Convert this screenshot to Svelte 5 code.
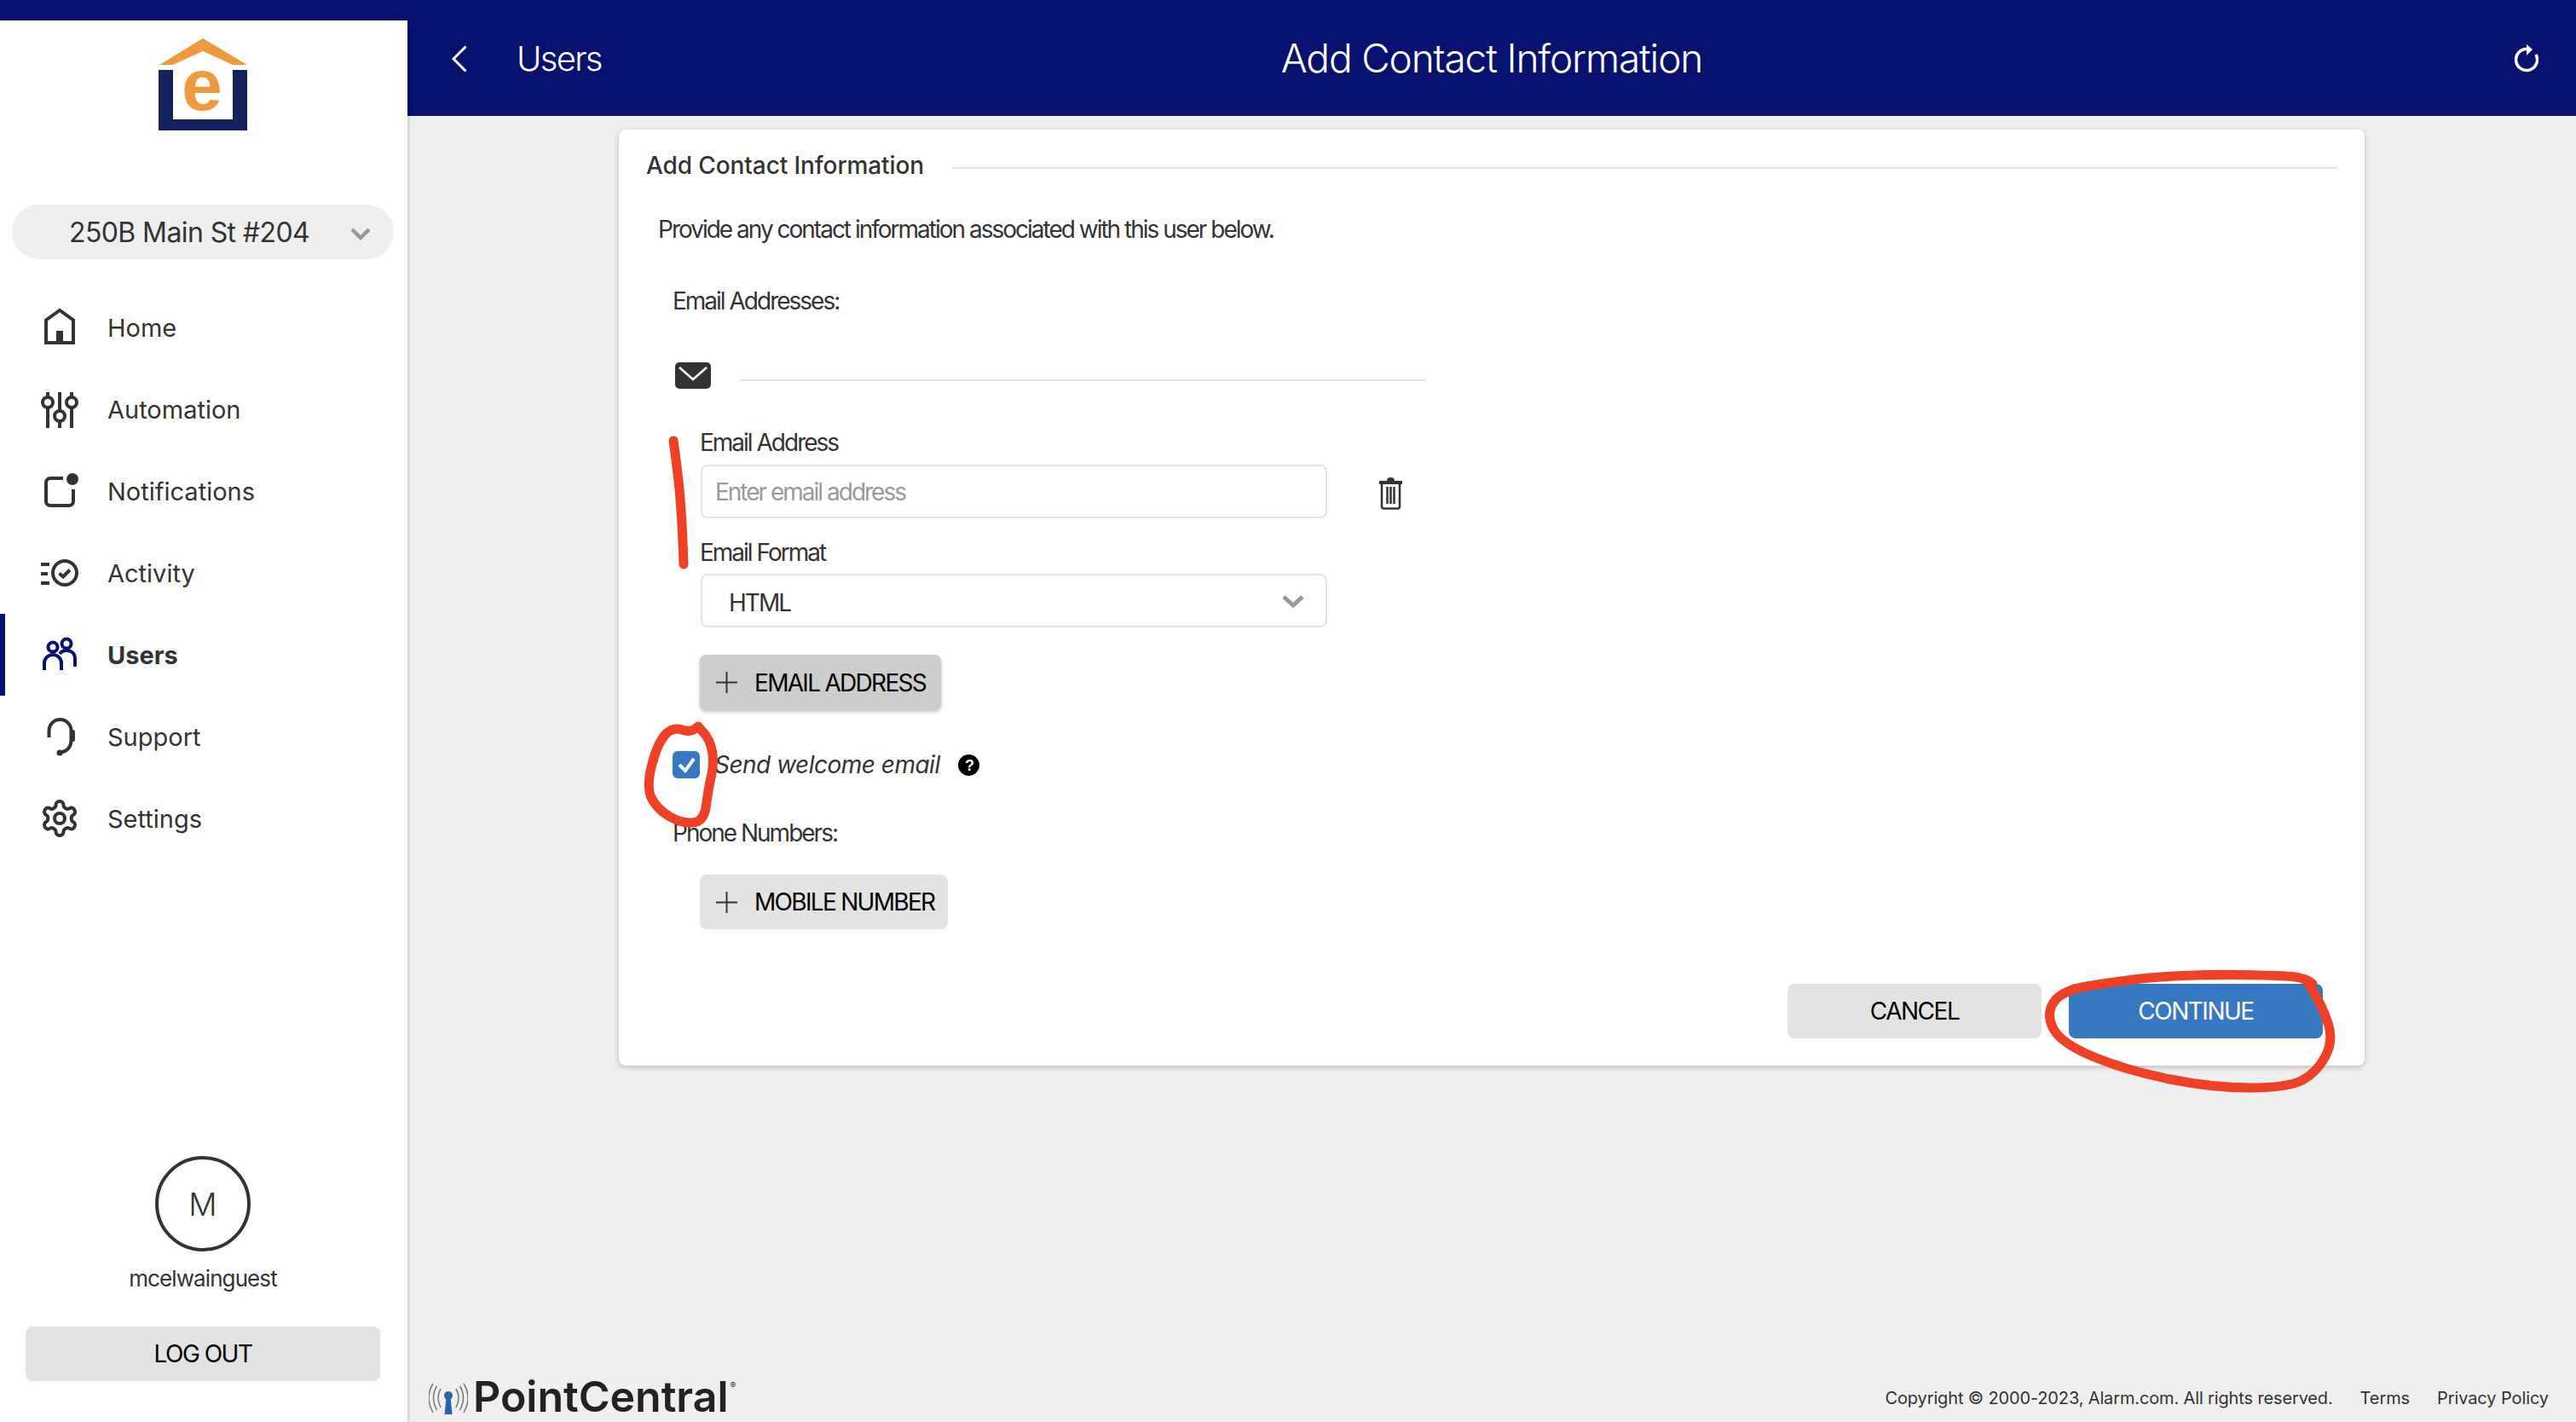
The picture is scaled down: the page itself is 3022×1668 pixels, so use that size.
<script lang="ts">
	const navItems = [
		{ key: 'home', label: 'Home' },
		{ key: 'automation', label: 'Automation' },
		{ key: 'notifications', label: 'Notifications' },
		{ key: 'activity', label: 'Activity' },
		{ key: 'users', label: 'Users', active: true },
		{ key: 'support', label: 'Support' },
		{ key: 'settings', label: 'Settings' }
	];

	// Hand-drawn red marks on top of the screenshot
	const marks = [
		[[790, 517], [796, 560], [800, 610], [802, 662]],
		[[819, 852], [812, 860], [788, 852], [770, 875], [758, 925], [772, 950], [800, 966], [826, 964], [831, 925], [838, 895], [833, 868], [819, 852]],
		[[2713, 1154], [2704, 1146], [2660, 1144], [2595, 1143], [2527, 1146], [2478, 1152], [2418, 1162], [2400, 1190], [2418, 1224], [2496, 1256], [2596, 1276], [2684, 1276], [2718, 1258], [2738, 1220], [2724, 1180], [2708, 1154]]
	];

	function smooth(points: number[][]) {
		let d = `M${points[0][0]} ${points[0][1]}`;
		for (let i = 1; i < points.length - 1; i++) {
			const mx = (points[i][0] + points[i + 1][0]) / 2;
			const my = (points[i][1] + points[i + 1][1]) / 2;
			d += ` Q${points[i][0]} ${points[i][1]} ${mx} ${my}`;
		}
		const last = points[points.length - 1];
		return d + ` L${last[0]} ${last[1]}`;
	}
</script>

{#snippet navIcon(key: string)}
	{#if key === 'home'}
		<svg class="nav-icon" viewBox="0 0 48 48" fill="none" stroke="currentColor" stroke-width="4">
			<path d="M8 42V15.5L24 4l16 11.5V42z" />
			<rect x="20" y="28" width="8" height="14" fill="currentColor" stroke="none" />
		</svg>
	{:else if key === 'automation'}
		<svg class="nav-icon" viewBox="0 0 48 48" fill="none" stroke="currentColor" stroke-width="4">
			<path d="M10 4v5M10 22v24M24 4v22M24 38v8M38 4v5M38 22v24" />
			<circle cx="10" cy="16" r="6" />
			<circle cx="24" cy="32" r="6" />
			<circle cx="38" cy="16" r="6" />
		</svg>
	{:else if key === 'notifications'}
		<svg class="nav-icon" viewBox="0 0 48 48" fill="none" stroke="currentColor" stroke-width="4">
			<path d="M28 9H13a5 5 0 0 0-5 5v22a5 5 0 0 0 5 5h22a5 5 0 0 0 5-5V22" />
			<circle cx="39" cy="10" r="7" fill="currentColor" stroke="none" />
		</svg>
	{:else if key === 'activity'}
		<svg class="nav-icon" viewBox="0 0 48 48" fill="none" stroke="currentColor" stroke-width="4">
			<path d="M2 14h10M2 25h8M2 36h10" />
			<circle cx="30" cy="24" r="14" />
			<path d="M23.5 24.5l4.5 4 8-8" />
		</svg>
	{:else if key === 'users'}
		<svg class="nav-icon" viewBox="0 0 48 48" fill="none" stroke="currentColor" stroke-width="4">
			<circle cx="16" cy="15" r="5.5" />
			<circle cx="32" cy="11" r="5.5" />
			<path d="M6 42v-8a10 10 0 0 1 20 0v8" />
			<path d="M24 23c2-3 5-4 8-4 6 0 10 4 10 10v9" />
		</svg>
	{:else if key === 'support'}
		<svg class="nav-icon" viewBox="0 0 48 48" fill="none" stroke="currentColor" stroke-width="4">
			<path d="M11.5 25v-8a13 13 0 0 1 26 0v11c0 8-4 13-13 15" />
			<rect x="37" y="16" width="5" height="14" rx="2.5" fill="currentColor" stroke="none" />
			<circle cx="24" cy="43" r="3.5" fill="currentColor" stroke="none" />
		</svg>
	{:else}
		<svg class="nav-icon" viewBox="0 0 24 24" fill="none" stroke="currentColor" stroke-width="2">
			<path d="M12.22 2h-.44a2 2 0 0 0-2 2v.18a2 2 0 0 1-1 1.73l-.43.25a2 2 0 0 1-2 0l-.15-.08a2 2 0 0 0-2.73.73l-.22.38a2 2 0 0 0 .73 2.73l.15.1a2 2 0 0 1 1 1.72v.51a2 2 0 0 1-1 1.74l-.15.09a2 2 0 0 0-.73 2.73l.22.38a2 2 0 0 0 2.73.73l.15-.08a2 2 0 0 1 2 0l.43.25a2 2 0 0 1 1 1.73V20a2 2 0 0 0 2 2h.44a2 2 0 0 0 2-2v-.18a2 2 0 0 1 1-1.73l.43-.25a2 2 0 0 1 2 0l.15.08a2 2 0 0 0 2.73-.73l.22-.39a2 2 0 0 0-.73-2.73l-.15-.08a2 2 0 0 1-1-1.74v-.5a2 2 0 0 1 1-1.74l.15-.09a2 2 0 0 0 .73-2.73l-.22-.38a2 2 0 0 0-2.73-.73l-.15.08a2 2 0 0 1-2 0l-.43-.25a2 2 0 0 1-1-1.73V4a2 2 0 0 0-2-2z" />
			<circle cx="12" cy="12" r="3" />
		</svg>
	{/if}
{/snippet}

{#snippet plusIcon()}
	<svg class="plus" viewBox="0 0 26 26" fill="none" stroke="#333" stroke-width="2">
		<path d="M13 0v26M0 13h26" />
	</svg>
{/snippet}

<div class="app">
	<div class="side-col">
		<aside class="sidebar">
			<svg class="logo" viewBox="0 0 106 108">
				<path d="M53 0l52 31H88L53 15 18 31H2z" fill="#f09a3e" />
				<path d="M1 37h17v58h70V37h17v71H1z" fill="#13235b" />
				<text x="52" y="84" text-anchor="middle" font-family="Liberation Sans, sans-serif" font-weight="700" font-size="86" fill="#f09a3e">e</text>
			</svg>

			<div class="property">
				<span>250B Main St #204</span>
				<svg class="property-chevron" viewBox="0 0 24 16" fill="none" stroke="#999" stroke-width="4.5">
					<path d="M2 3l10 10L22 3" />
				</svg>
			</div>

			<nav class="nav">
				{#each navItems as item}
					<div class="nav-item" class:active={item.active}>
						{@render navIcon(item.key)}
						<span>{item.label}</span>
					</div>
				{/each}
			</nav>

			<div class="account">
				<div class="avatar">M</div>
				<div class="username">mcelwainguest</div>
				<button class="logout">LOG OUT</button>
			</div>
		</aside>
	</div>

	<main class="main">
		<header class="topbar">
			<div class="back">
				<svg class="back-icon" viewBox="0 0 18 32" fill="none" stroke="#fff" stroke-width="3">
					<path d="M16.5 1.5L2 16l14.5 14.5" />
				</svg>
				<span>Users</span>
			</div>
			<h1>Add Contact Information</h1>
			<svg class="refresh" viewBox="0 0 28 34" fill="none" stroke="#fff" stroke-width="3.5">
				<path d="M14 6.500A12.500 12.500 0 1 0 25 13" />
				<path d="M14 1l7 6-7 7z" fill="#fff" stroke="none" />
			</svg>
		</header>

		<div class="content">
			<section class="card">
				<div class="card-head">
					<h2>Add Contact Information</h2>
					<div class="rule"></div>
				</div>

				<p class="intro">Provide any contact information associated with this user below.</p>

				<div class="section-label email-label">Email Addresses:</div>

				<div class="email-row">
					<svg class="envelope" viewBox="0 0 42 31">
						<rect width="42" height="31" rx="5" fill="#333" />
						<path d="M5 6l16 14L37 6" fill="none" stroke="#fff" stroke-width="2.500" />
					</svg>
					<div class="email-rule"></div>
				</div>

				<div class="fields">
					<label class="field-label" for="email">Email Address</label>
					<div class="input-row">
						<input id="email" class="text-input" placeholder="Enter email address" />
						<svg class="trash" viewBox="0 0 27 39" fill="none" stroke="#333" stroke-width="2.5">
							<path d="M0 7h27" stroke-width="4" />
							<path d="M9 5q0-4 4.5-4T18 5z" fill="#333" stroke="none" />
							<path d="M3 9v26a2.5 2.5 0 0 0 2.5 2.5h16A2.5 2.5 0 0 0 24 35V9M9.5 12v20M13.5 12v20M17.5 12v20" />
						</svg>
					</div>

					<label class="field-label format-label" for="format">Email Format</label>
					<div class="select-wrap">
						<select id="format" class="select">
							<option>HTML</option>
						</select>
						<svg class="select-chevron" viewBox="0 0 26 16" fill="none" stroke="#999" stroke-width="5">
							<path d="M2 3l11 10L24 3" />
						</svg>
					</div>

					<button class="add-btn pressed">
						{@render plusIcon()}
						EMAIL ADDRESS
					</button>
				</div>

				<div class="welcome">
					<span class="checkbox">
						<svg viewBox="0 0 32 32" fill="none" stroke="#fff" stroke-width="4">
							<path d="M8 16l7 7L25 9" />
						</svg>
					</span>
					<span class="welcome-text">Send welcome email</span>
					<svg class="help" viewBox="0 0 25 25">
						<circle cx="12.5" cy="12.5" r="12.5" fill="#000" />
						<text x="12.5" y="19" text-anchor="middle" font-family="Liberation Sans, sans-serif" font-weight="700" font-size="18" fill="#fff">?</text>
					</svg>
				</div>

				<div class="section-label phone-label">Phone Numbers:</div>

				<div class="fields">
					<button class="add-btn mobile">
						{@render plusIcon()}
						MOBILE NUMBER
					</button>
				</div>

				<div class="actions">
					<button class="action cancel">CANCEL</button>
					<button class="action continue">CONTINUE</button>
				</div>
			</section>
		</div>

		<footer class="footer">
			<div class="brand">
				<svg class="brand-icon" viewBox="0 0 46 40" fill="none" stroke="#777" stroke-width="1.5">
					<path d="M14 8q-6 10 0 22M9.500 5q-8 13 0 28M5 2q-10 16 0 34" />
					<path d="M32 8q6 10 0 22M36.500 5q8 13 0 28M41 2q10 16 0 34" />
					<circle cx="23" cy="16" r="5" fill="#2a62ad" stroke="none" />
					<path d="M20.500 18h5l2 20h-9z" fill="#2a62ad" stroke="none" />
				</svg>
				<span class="brand-name">PointCentral</span>
				<span class="brand-mark">®</span>
			</div>
			<div class="legal">
				<span class="copyright">Copyright © 2000-2023, Alarm.com. All rights reserved.</span>
				<span>Terms</span>
				<span>Privacy Policy</span>
			</div>
		</footer>
	</main>

	<svg class="marks" viewBox="0 0 3022 1668" fill="none" stroke="#ee4126" stroke-width="11" stroke-linecap="round" stroke-linejoin="round">
		{#each marks as mark}
			<path d={smooth(mark)} />
		{/each}
	</svg>
</div>

<style>
	:global(body) {
		margin: 0;
		background: #efefef;
	}

	.app {
		position: relative;
		display: flex;
		width: 3022px;
		height: 1668px;
		overflow: hidden;
		font-family: Inter, 'Liberation Sans', sans-serif;
		color: #333;
		background: #efefef;
	}

	/* Sidebar */
	.side-col {
		flex: none;
		width: 478px;
		background: linear-gradient(#07116f 136px, transparent 136px);
		position: relative;
		z-index: 1;
	}

	.sidebar {
		display: flex;
		flex-direction: column;
		height: 1644px;
		margin-top: 24px;
		background: #fff;
		box-shadow: 2px 0 3px rgba(0, 0, 0, 0.12);
	}

	.logo {
		width: 106px;
		height: 108px;
		margin: 21px 0 0 185px;
	}

	.property {
		position: relative;
		display: flex;
		align-items: center;
		height: 64px;
		margin: 87px 16px 0 14px;
		padding-left: 67px;
		border-radius: 32px;
		background: #efefef;
		font-size: 32px;
		letter-spacing: -0.6px;
	}

	.property-chevron {
		position: absolute;
		right: 27px;
		top: 26px;
		width: 24px;
		height: 16px;
	}

	.nav {
		margin-top: 32px;
	}

	.nav-item {
		display: flex;
		align-items: center;
		gap: 32px;
		height: 96px;
		padding-left: 46px;
		font-size: 29px;
		box-sizing: border-box;
	}

	.nav-item.active {
		font-weight: 700;
		border-left: 6px solid #07116f;
		padding-left: 40px;
	}

	.nav-item.active .nav-icon {
		color: #07116f;
	}

	.nav-icon {
		flex: none;
		width: 48px;
		height: 48px;
	}

	.account {
		display: flex;
		flex-direction: column;
		align-items: center;
		margin-top: auto;
		padding: 0 2px 48px 0;
	}

	.avatar {
		display: flex;
		align-items: center;
		justify-content: center;
		width: 112px;
		height: 112px;
		border: 4px solid #333;
		border-radius: 50%;
		box-sizing: border-box;
		font-size: 37px;
		font-weight: 300;
	}

	.username {
		margin-top: 14px;
		line-height: 36px;
		font-size: 26px;
		letter-spacing: -0.9px;
	}

	.logout {
		width: 416px;
		height: 64px;
		margin-top: 38px;
		border: none;
		border-radius: 8px;
		background: #e3e3e3;
		color: #000;
		font: inherit;
		font-size: 28px;
		letter-spacing: -1.5px;
	}

	/* Main column */
	.main {
		flex: 1;
		display: flex;
		flex-direction: column;
		min-width: 0;
	}

	.topbar {
		position: relative;
		display: flex;
		align-items: center;
		justify-content: center;
		flex: none;
		height: 136px;
		background: #07116f;
		color: #fff;
	}

	.back {
		position: absolute;
		left: 52px;
		top: 0;
		bottom: 0;
		display: flex;
		align-items: center;
		gap: 58px;
		font-size: 40px;
		font-weight: 300;
		letter-spacing: -1.7px;
	}

	.back-icon {
		width: 18px;
		height: 32px;
		margin-top: 2px;
	}

	.topbar h1 {
		margin: 0;
		font-size: 46px;
		font-weight: 300;
		letter-spacing: -1.15px;
	}

	.refresh {
		position: absolute;
		right: 44px;
		top: 51px;
		width: 28px;
		height: 34px;
	}

	.content {
		flex: 1;
		padding-top: 16px;
	}

	.card {
		box-sizing: border-box;
		width: 2048px;
		height: 1098px;
		margin: 0 auto;
		padding: 0 32px;
		border-radius: 8px;
		background: #fff;
		box-shadow: 0 2px 6px rgba(0, 0, 0, 0.22);
		font-size: 28px;
		letter-spacing: -2px;
	}

	.card-head {
		display: flex;
		align-items: center;
		gap: 33px;
		height: 84px;
	}

	.card-head h2 {
		margin: 0;
		font-size: 28px;
		font-weight: 500;
		letter-spacing: -0.1px;
		white-space: nowrap;
	}

	.rule {
		flex: 1;
		height: 2px;
		margin-top: 6px;
		background: #e3e3e3;
	}

	.intro {
		margin: 13px 0 0 14px;
		line-height: 40px;
	}

	.section-label {
		margin-left: 31px;
		line-height: 40px;
	}

	.email-label {
		margin-top: 44px;
	}

	.email-row {
		display: flex;
		gap: 34px;
		height: 32px;
		margin: 52px 0 0 34px;
	}

	.envelope {
		flex: none;
		width: 42px;
		height: 31px;
	}

	.email-rule {
		width: 805px;
		height: 2px;
		margin-top: 20px;
		background: #e3e3e3;
	}

	.fields {
		margin-left: 63px;
	}

	.field-label {
		display: block;
		line-height: 40px;
		margin-top: 42px;
	}

	.format-label {
		margin-top: 20px;
	}

	.input-row {
		display: flex;
		align-items: flex-start;
		gap: 61px;
		margin: 6px 0 0 1px;
	}

	.text-input,
	.select {
		box-sizing: border-box;
		width: 735px;
		height: 63px;
		border: 2px solid #e3e3e3;
		border-radius: 8px;
		background: #fff;
		font: inherit;
		letter-spacing: inherit;
		color: #333;
		outline: none;
	}

	.text-input {
		padding-left: 15px;
	}

	.text-input::placeholder {
		color: #999;
	}

	.trash {
		flex: none;
		width: 27px;
		height: 39px;
		margin-top: 14px;
	}

	.select-wrap {
		position: relative;
		width: 735px;
		margin: 5px 0 0 1px;
	}

	.select {
		display: block;
		appearance: none;
		padding: 4px 0 0 31px;
	}

	.select-chevron {
		position: absolute;
		right: 27px;
		top: 24px;
		width: 26px;
		height: 16px;
	}

	.add-btn {
		display: flex;
		align-items: center;
		gap: 20px;
		box-sizing: border-box;
		height: 64px;
		padding: 0 0 0 19px;
		border: none;
		border-radius: 8px;
		background: #e3e3e3;
		color: #000;
		font: inherit;
		letter-spacing: -1.7px;
		white-space: nowrap;
	}

	.add-btn.pressed {
		width: 283px;
		height: 65px;
		margin-top: 32px;
		background: #cdcdcd;
		box-shadow: 0 2px 4px rgba(0, 0, 0, 0.25);
	}

	.add-btn.mobile {
		width: 291px;
		margin-top: 29px;
	}

	.plus {
		flex: none;
		width: 25px;
		height: 25px;
	}

	.welcome {
		display: flex;
		align-items: center;
		height: 32px;
		margin: 48px 0 0 31px;
	}

	.checkbox {
		flex: none;
		display: block;
		width: 32px;
		height: 32px;
		border-radius: 6px;
		background: #3778c2;
	}

	.checkbox svg {
		display: block;
	}

	.welcome-text {
		margin-left: 17px;
		font-style: italic;
		letter-spacing: -0.5px;
	}

	.help {
		flex: none;
		width: 25px;
		height: 25px;
		margin-left: 21px;
	}

	.phone-label {
		margin-top: 44px;
	}

	.actions {
		display: flex;
		justify-content: flex-end;
		gap: 32px;
		margin: 64px 17px 0 0;
	}

	.action {
		width: 298px;
		height: 64px;
		border: none;
		border-radius: 8px;
		font: inherit;
		letter-spacing: -1.5px;
	}

	.cancel {
		background: #e3e3e3;
		color: #000;
	}

	.continue {
		background: #3778c2;
		color: #fff;
	}

	/* Footer */
	.footer {
		display: flex;
		align-items: flex-end;
		justify-content: space-between;
		height: 52px;
		padding: 0 32px 0 24px;
	}

	.brand {
		display: flex;
		align-items: flex-start;
		height: 52px;
	}

	.brand-icon {
		flex: none;
		width: 46px;
		height: 40px;
		margin: 5px 6px 0 1px;
	}

	.brand-name {
		margin-top: -3px;
		font-size: 50px;
		font-weight: 600;
		line-height: 50px;
		color: #222;
	}

	.brand-mark {
		font-size: 10px;
		line-height: 14px;
		margin: 2px 0 0 2px;
	}

	.legal {
		display: flex;
		gap: 32px;
		margin-bottom: 14px;
		font-size: 20px;
		line-height: 28px;
		letter-spacing: -0.1px;
	}

	.copyright {
		letter-spacing: -0.14px;
	}

	/* Red scribbles over the page */
	.marks {
		position: absolute;
		inset: 0;
		width: 3022px;
		height: 1668px;
		z-index: 2;
		pointer-events: none;
	}
</style>
